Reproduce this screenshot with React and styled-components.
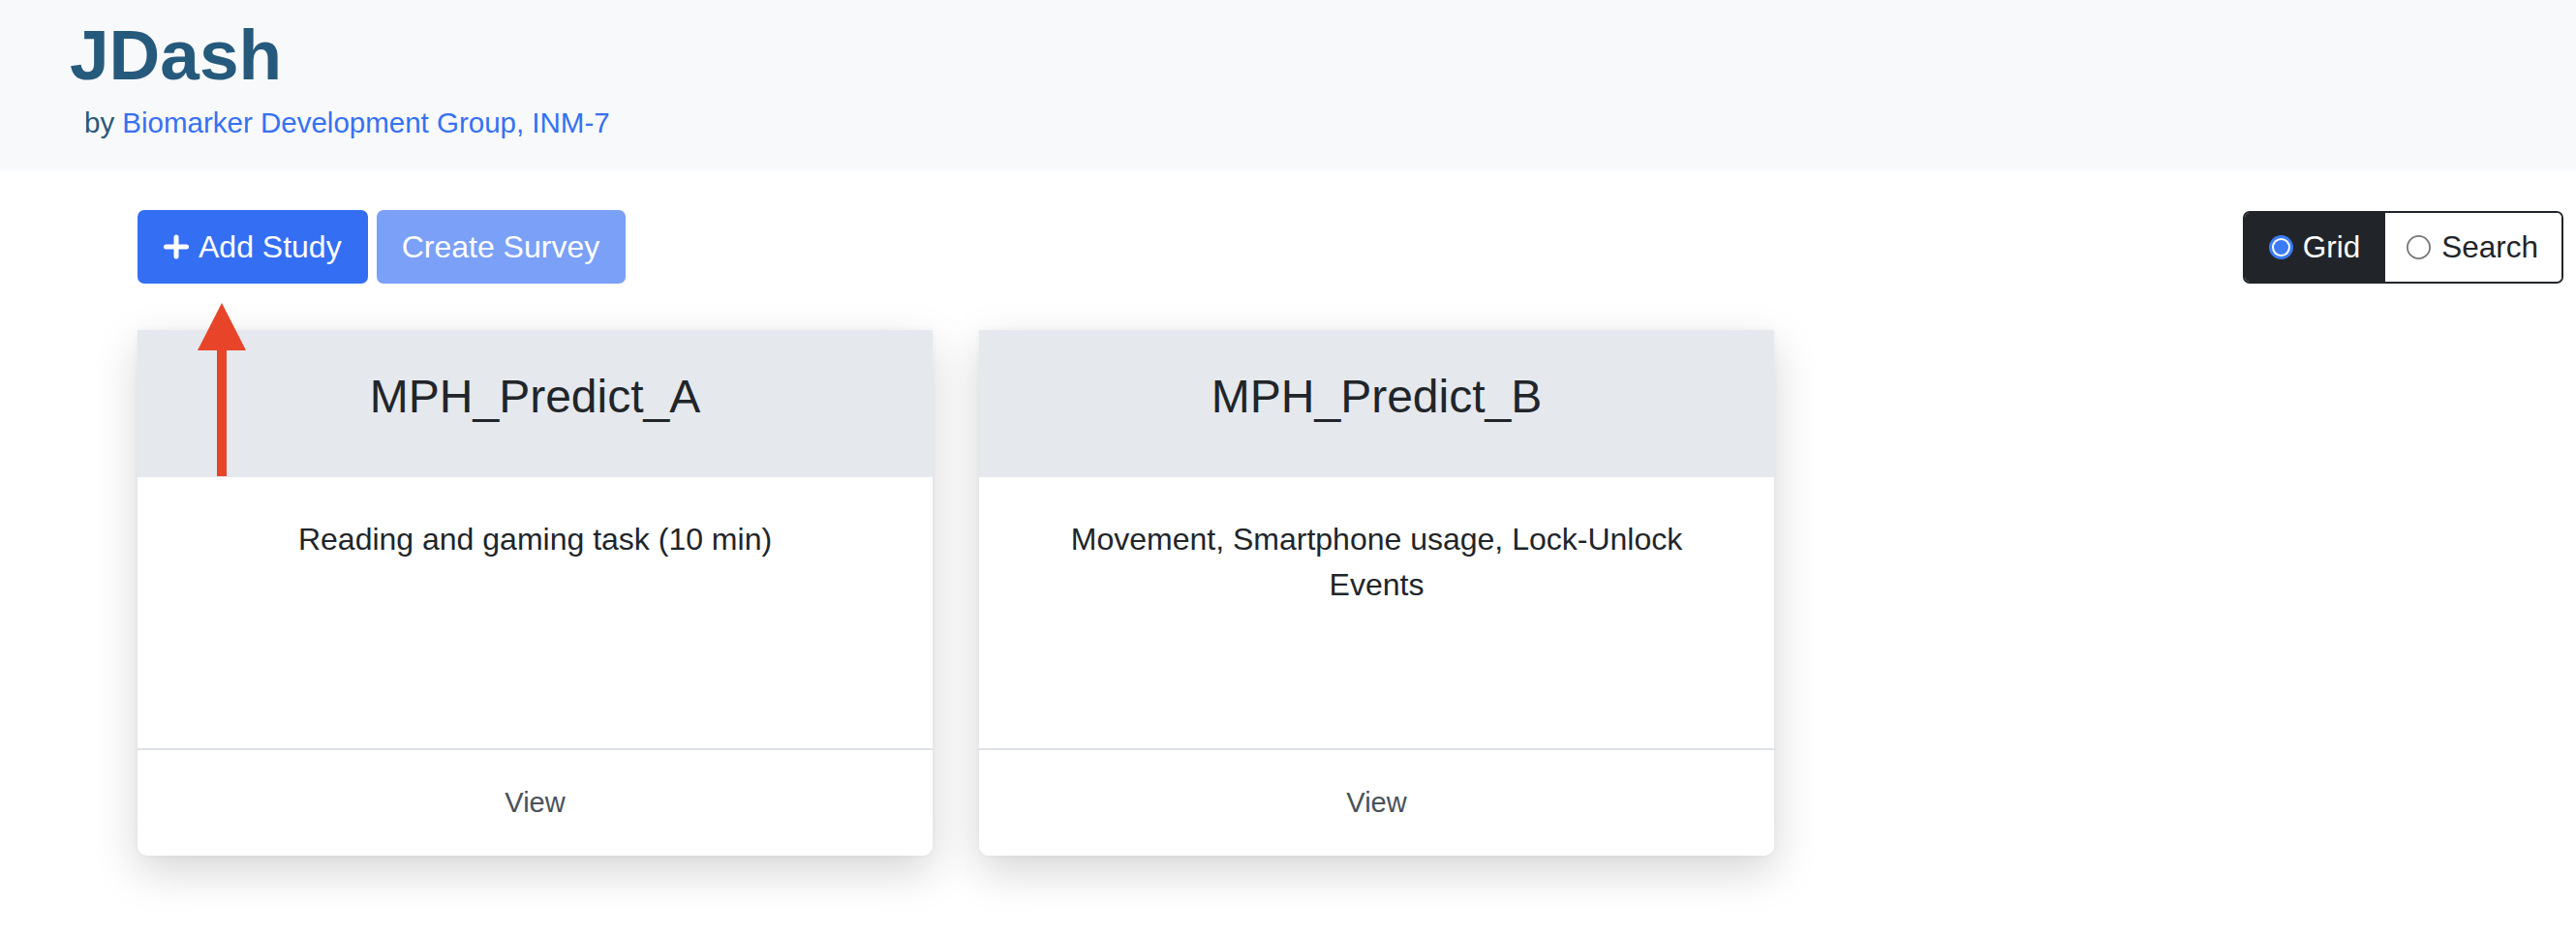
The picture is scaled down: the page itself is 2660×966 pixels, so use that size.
import React from "react";
import styled, { createGlobalStyle } from "styled-components";

const GlobalStyle = createGlobalStyle`
	html, body {
		margin: 0;
		padding: 0;
		background: #ffffff;
	}
	body {
		font-family: "Liberation Sans", Arial, sans-serif;
		color: #212529;
	}
	* {
		box-sizing: border-box;
	}
`;

const studies = [
	{ id: "a", name: "MPH_Predict_A", description: "Reading and gaming task (10 min)" },
	{
		id: "b",
		name: "MPH_Predict_B",
		description: "Movement, Smartphone usage, Lock-Unlock Events",
	},
];

const PlusIcon = () => (
	<svg width="28" height="26" viewBox="0 0 28 26" aria-hidden="true">
		<path
			d="M14 3 V23 M3.5 13 H24.5"
			stroke="#ffffff"
			strokeWidth="5"
			strokeLinecap="round"
			fill="none"
		/>
	</svg>
);

const Radio = ({ checked }) =>
	checked ? (
		<svg width="25" height="25" viewBox="0 0 25 25" aria-hidden="true">
			<circle cx="12.5" cy="12.5" r="12.5" fill="#3b7bf6" />
			<circle cx="12.5" cy="12.5" r="9.5" fill="#ffffff" />
			<circle cx="12.5" cy="12.5" r="7.5" fill="#3b7bf6" />
		</svg>
	) : (
		<svg width="25" height="25" viewBox="0 0 25 25" aria-hidden="true">
			<circle cx="12.5" cy="12.5" r="11.6" fill="#ffffff" stroke="#767676" strokeWidth="1.8" />
		</svg>
	);

const Arrow = () => (
	<ArrowMark width="50" height="179" viewBox="0 0 50 179" aria-hidden="true">
		<polygon points="25,0 0,49 50,49" fill="#e8442a" />
		<rect x="20" y="48" width="10" height="131" fill="#e8442a" />
	</ArrowMark>
);

const App = () => {
	return (
		<>
			<GlobalStyle />
			<Header>
				<Title>JDash</Title>
				<Subtitle>
					by <a href="#bdg">Biomarker Development Group, INM-7</a>
				</Subtitle>
			</Header>
			<Main>
				<Toolbar>
					<ButtonRow>
						<Button type="button">
							<PlusIcon />
							Add Study
						</Button>
						<Button type="button" disabled>
							Create Survey
						</Button>
					</ButtonRow>
					<Toggle>
						<ToggleOption $active>
							<Radio checked />
							Grid
						</ToggleOption>
						<ToggleOption>
							<Radio />
							Search
						</ToggleOption>
					</Toggle>
				</Toolbar>
				<CardGrid>
					<Arrow />
					{studies.map((study) => (
						<Card key={study.id}>
							<CardHeader>
								<h2>{study.name}</h2>
							</CardHeader>
							<CardBody>{study.description}</CardBody>
							<CardFooter>View</CardFooter>
						</Card>
					))}
				</CardGrid>
			</Main>
		</>
	);
};

const Header = styled.header`
	background: #f8f9fa;
	height: 177px;
	padding: 20px 0 0 72px;
`;

const Title = styled.h1`
	margin: 0;
	font-size: 73px;
	line-height: 1;
	font-weight: 700;
	color: #265a7c;
`;

const Subtitle = styled.p`
	margin: 19px 0 0 15px;
	font-size: 29.5px;
	line-height: 1;
	color: #2a5878;
	a {
		color: #3571f1;
		text-decoration: none;
	}
`;

const Main = styled.main`
	padding: 40px 13px 80px 142px;
`;

const Toolbar = styled.div`
	display: flex;
	justify-content: space-between;
	align-items: center;
`;

const ButtonRow = styled.div`
	display: flex;
	gap: 9px;
`;

const Button = styled.button`
	display: flex;
	align-items: center;
	gap: 9px;
	height: 76px;
	padding: 0 27px 0 26px;
	border: none;
	border-radius: 7px;
	background: #346ef3;
	color: #ffffff;
	font-family: "Liberation Sans", Arial, sans-serif;
	font-size: 32px;
	line-height: 1.5;
	&:disabled {
		background: #7aa0f7;
	}
`;

const Toggle = styled.div`
	display: flex;
	height: 75px;
	border: 2px solid #212529;
	border-radius: 7px;
	overflow: hidden;
`;

const ToggleOption = styled.label`
	display: flex;
	align-items: center;
	gap: ${(p) => (p.$active ? "10px" : "11px")};
	padding: ${(p) => (p.$active ? "0 26px 0 25px" : "0 24px 0 22px")};
	background: ${(p) => (p.$active ? "#212529" : "#ffffff")};
	color: ${(p) => (p.$active ? "#ffffff" : "#212529")};
	font-size: 31.5px;
`;

const CardGrid = styled.div`
	position: relative;
	display: grid;
	grid-template-columns: repeat(2, 821px);
	gap: 48px;
	margin-top: 48px;
`;

const ArrowMark = styled.svg`
	position: absolute;
	left: 62px;
	top: -28px;
	z-index: 2;
`;

const Card = styled.div`
	display: flex;
	flex-direction: column;
	height: 543px;
	background: #ffffff;
	border-radius: 0 0 10px 10px;
	box-shadow: 0 16px 46px rgba(0, 0, 0, 0.17), 0 0 6px rgba(0, 0, 0, 0.04);
`;

const CardHeader = styled.div`
	display: flex;
	align-items: center;
	justify-content: center;
	height: 152px;
	background: #e5e8ed;
	h2 {
		margin: 0 0 14px;
		font-size: 48px;
		font-weight: 400;
		line-height: 1.2;
		color: #212529;
	}
`;

const CardBody = styled.div`
	height: 280px;
	padding: 41px 48px 0;
	text-align: center;
	font-size: 32px;
	line-height: 1.48;
	color: #212529;
`;

const CardFooter = styled.div`
	display: flex;
	align-items: center;
	justify-content: center;
	flex: 1;
	border-top: 2px solid #dee2e6;
	font-size: 29px;
	color: #4a515a;
`;

export default App;
